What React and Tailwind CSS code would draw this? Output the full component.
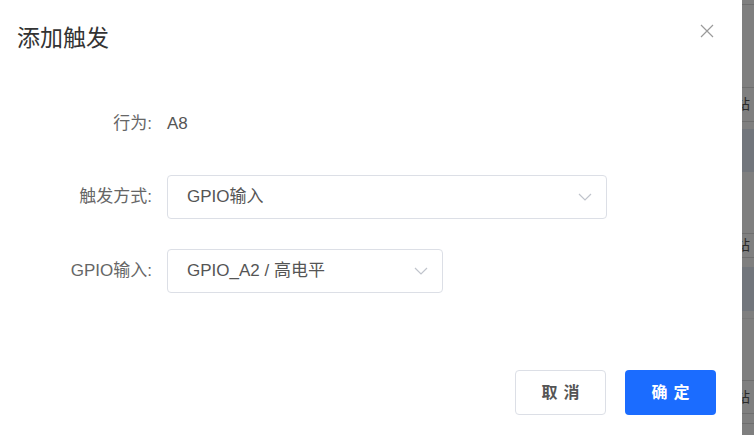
import React from 'react';

const FONT = { fontFamily: '"Liberation Sans", "Noto Sans CJK SC", sans-serif' };

const Chevron = () => (
  <svg width="14" height="8" viewBox="0 0 14 8" fill="none" className="shrink-0">
    <polyline points="1,1 7,7 13,1" stroke="#c0c4cc" strokeWidth="1.2" />
  </svg>
);

const SelectBox = ({ value, width }) => (
  <div
    className={`flex items-center justify-between h-[44px] pl-[19px] pr-[14px] border border-[#dcdfe6] rounded-[4px] bg-white ${width}`}
  >
    <span className="text-[17px] text-[#555]">{value}</span>
    <Chevron />
  </div>
);

const FormRow = ({ label, children, className = '' }) => (
  <div className={`flex items-center h-[44px] ${className}`}>
    <div className="w-[152px] text-right text-[17px] text-[#666]">{label}</div>
    <div className="ml-[15px]">{children}</div>
  </div>
);

// right edge of the page behind the mask
const StripCell = ({ h }) => (
  <div className={`${h} flex items-center overflow-hidden`}>
    <span className="ml-[-6px] text-[14px] text-[#2a2a2a] whitespace-nowrap">站</span>
  </div>
);

const BackdropStrip = () => {
  const line = 'h-px bg-[#6e6e6e]';
  return (
    <div className="flex-1 h-full overflow-hidden bg-[#7f7f7f] flex flex-col">
      <div className="h-[4px]" />
      <div className={line} />
      <div className="h-[82px]" />
      <div className={line} />
      <StripCell h="h-[33px]" />
      <div className={line} />
      <div className="h-[7px]" />
      <div className="h-[43px] bg-[#72767c]" />
      <div className="h-[61px]" />
      <div className={line} />
      <StripCell h="h-[23px]" />
      <div className={line} />
      <div className="h-[9px]" />
      <div className="h-[44px] bg-[#72767c]" />
      <div className="h-[7px]" />
      <div className="h-px bg-[#787878]" />
      <div className="h-[61px]" />
      <div className={line} />
      <StripCell h="h-[32px]" />
      <div className={line} />
      <div className="h-[9px]" />
      <div className={line} />
      <div className="flex-1" />
    </div>
  );
};

export default function App() {
  return (
    <div className="w-[754px] h-[435px] flex overflow-hidden" style={FONT}>
      <div className="w-[742px] shrink-0 h-full bg-white flex flex-col">
        {/* Header */}
        <div className="flex items-center justify-between pl-[17px] pr-[28px] pt-[24px] h-[52px]">
          <h2 className="text-[23px] leading-[28px] text-[#333]">添加触发</h2>
          <button className="text-[#999] mt-[-14px]">
            <svg width="14" height="14" viewBox="0 0 14 14" fill="none">
              <path d="M1 1L13 13M13 1L1 13" stroke="#9a9a9a" strokeWidth="1.2" />
            </svg>
          </button>
        </div>

        {/* Body */}
        <div className="pt-[50px] flex flex-col">
          <FormRow label="行为:" className="mb-[29px]">
            <span className="text-[17px] text-[#555]">A8</span>
          </FormRow>
          <FormRow label="触发方式:" className="mb-[30px]">
            <SelectBox value="GPIO输入" width="w-[440px]" />
          </FormRow>
          <FormRow label="GPIO输入:">
            <SelectBox value="GPIO_A2 / 高电平" width="w-[276px]" />
          </FormRow>
        </div>

        {/* Footer */}
        <div className="flex justify-end gap-[19px] pr-[26px] mt-[77px]">
          <button className="w-[91px] h-[45px] border border-[#dcdfe6] rounded-[4px] bg-white text-[16px] font-bold text-[#555] tracking-[6px] pl-[6px]">
            取消
          </button>
          <button className="w-[91px] h-[45px] rounded-[4px] bg-[#1b6cff] text-[16px] font-bold text-white tracking-[6px] pl-[6px]">
            确定
          </button>
        </div>
      </div>
      <BackdropStrip />
    </div>
  );
}
